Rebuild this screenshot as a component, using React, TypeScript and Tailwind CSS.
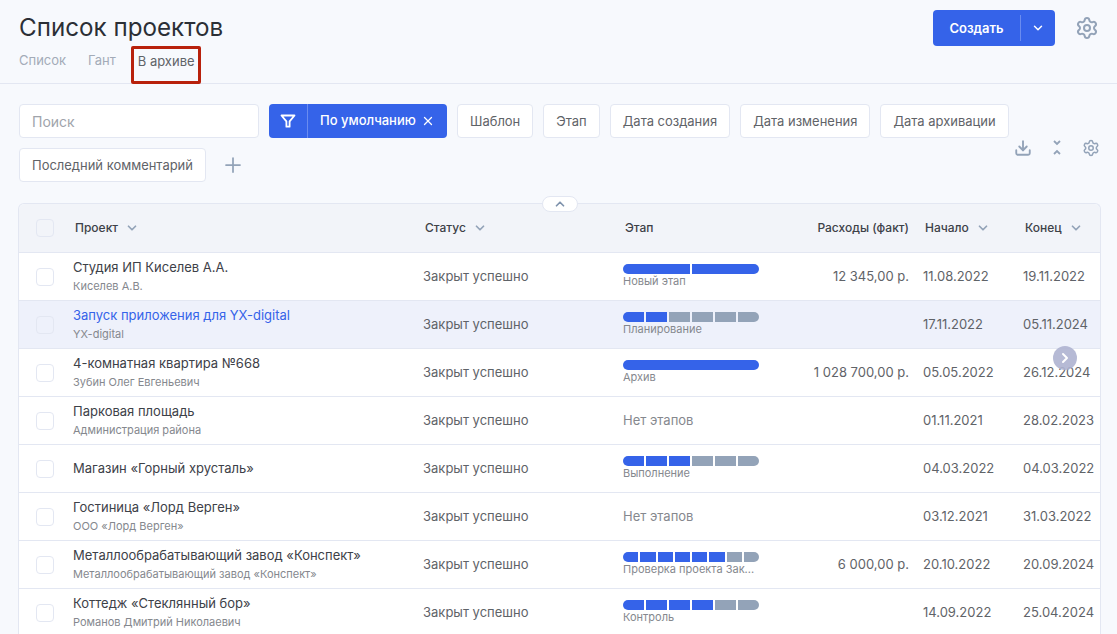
import { ChevronDown, ChevronRight, ChevronUp, Download, Plus, Settings, X } from "lucide-react";

type Project = {
  name: string;
  client: string;
  stage?: string;
  done?: number;
  total?: number;
  cost?: string;
  start: string;
  end: string;
  active?: boolean;
};

const projects: Project[] = [
  { name: "Студия ИП Киселев А.А.", client: "Киселев А.В.", stage: "Новый этап", done: 2, total: 2, cost: "12 345,00 р.", start: "11.08.2022", end: "19.11.2022" },
  { name: "Запуск приложения для YX-digital", client: "YX-digital", stage: "Планирование", done: 2, total: 6, start: "17.11.2022", end: "05.11.2024", active: true },
  { name: "4-комнатная квартира №668", client: "Зубин Олег Евгеньевич", stage: "Архив", done: 1, total: 1, cost: "1 028 700,00 р.", start: "05.05.2022", end: "26.12.2024" },
  { name: "Парковая площадь", client: "Администрация района", start: "01.11.2021", end: "28.02.2023" },
  { name: "Магазин «Горный хрусталь»", client: "", stage: "Выполнение", done: 3, total: 6, start: "04.03.2022", end: "04.03.2022" },
  { name: "Гостиница «Лорд Верген»", client: "ООО «Лорд Верген»", start: "03.12.2021", end: "31.03.2022" },
  { name: "Металлообрабатывающий завод «Конспект»", client: "Металлообрабатывающий завод «Конспект»", stage: "Проверка проекта Зак...", done: 6, total: 8, cost: "6 000,00 р.", start: "20.10.2022", end: "20.09.2024" },
  { name: "Коттедж «Стеклянный бор»", client: "Романов Дмитрий Николаевич", stage: "Контроль", done: 4, total: 6, start: "14.09.2022", end: "25.04.2024" },
];

const filters = ["Шаблон", "Этап", "Дата создания", "Дата изменения", "Дата архивации"];

const rowGrid = "grid grid-cols-[54px_350px_200px_136px_164px_100px_79px]";

function FilterChip({ label }: { label: string }) {
  return (
    <div className="flex h-[34px] items-center rounded-[4px] border border-[#e3e7f2] bg-white px-3 pt-[1px] text-[12.97px] text-[#5f6368]">
      {label}
    </div>
  );
}

function HeadCell({ label, className }: { label: string; className?: string }) {
  return (
    <div className={`flex items-center gap-[7px] text-[12px] font-medium text-[#3d4148] ${className ?? ""}`}>
      {label}
      <ChevronDown className="h-[14px] w-[14px] text-[#93a3b8]" strokeWidth={3} />
    </div>
  );
}

function StageBar({ done, total }: { done: number; total: number }) {
  return (
    <div className="flex h-2.5 w-[136px] gap-[2px] overflow-hidden rounded-full">
      {Array.from({ length: total }, (_, i) => (
        <div key={i} className={`flex-1 ${i < done ? "bg-[#3563e9]" : "bg-[#93a3b8]"}`} />
      ))}
    </div>
  );
}

function ProjectRow({ project }: { project: Project }) {
  return (
    <div className={`${rowGrid} h-12 items-center border-b border-[#e3e7f2] ${project.active ? "bg-[#eef1fb]" : "bg-white"}`}>
      <div className="pl-[17px]">
        <div className={`h-[18px] w-[18px] rounded-[4px] border border-[#e3e7f2] ${project.active ? "bg-[#eef1fb]" : "bg-white"}`} />
      </div>
      <div className="min-w-0 pb-[2px]">
        <div className={`whitespace-nowrap text-[13px] leading-[18px] ${project.active ? "text-[#3563e9]" : "text-[#3d4148]"}`}>
          {project.name}
        </div>
        {project.client && (
          <div className="mt-[2px] whitespace-nowrap text-[11px] leading-[16px] text-[#85888e]">{project.client}</div>
        )}
      </div>
      <div className="text-[13px] text-[#5f6368]">Закрыт успешно</div>
      <div>
        {project.stage ? (
          <div className="pb-[1px]">
            <StageBar done={project.done ?? 0} total={project.total ?? 1} />
            <div className="whitespace-nowrap text-[11px] leading-[14px] text-[#85888e]">{project.stage}</div>
          </div>
        ) : (
          <div className="text-[13px] text-[#85888e]">Нет этапов</div>
        )}
      </div>
      <div className="whitespace-nowrap pr-[14px] text-right text-[13px] text-[#5f6368]">{project.cost}</div>
      <div className="text-[13px] text-[#5f6368]">{project.start}</div>
      <div className="text-[13px] text-[#5f6368]">{project.end}</div>
    </div>
  );
}

export default function App() {
  return (
    <div className="h-[634px] w-[1117px] overflow-hidden bg-[#f7f9fd] font-['Inter',sans-serif]">
      <header className="flex h-[84px] items-start justify-between border-b border-[#e3e7f2] pl-[19px] pr-[18px]">
        <div>
          <h1 className="mt-[12px] text-[24.2px] font-normal leading-[32px] text-[#2b2f36]">Список проектов</h1>
          <nav className="mt-[2px] flex text-[13px] leading-[28px]">
            <span className="mr-[22px] text-[#a3abb8]">Список</span>
            <span className="mr-[15px] text-[#a3abb8]">Гант</span>
            <span className="h-[38px] w-[70px] rounded-[2px] border-[3px] border-[#b8210c] pl-[4px] text-[#5f6368] [line-height:24px]">
              В архиве
            </span>
          </nav>
        </div>
        <div className="mt-[10px] flex items-center gap-[20px]">
          <div className="flex h-9 w-[122px] items-center rounded-[4px] bg-[#3563e9] text-white">
            <span className="flex-1 pt-[1px] text-center text-[13px] font-semibold">Создать</span>
            <span className="h-[26px] w-px bg-[#6a8cf0]" />
            <span className="flex w-[34px] justify-center">
              <ChevronDown className="h-[14px] w-[14px]" strokeWidth={2.5} />
            </span>
          </div>
          <Settings className="h-6 w-6 text-[#93a3b8]" strokeWidth={2} />
        </div>
      </header>

      <section className="flex items-start justify-between pl-[19px] pr-[17px] pt-5">
        <div className="flex w-[1000px] flex-wrap items-center gap-x-[10px] gap-y-[10px]">
          <div className="flex h-[34px] w-[240px] items-center rounded-[4px] border border-[#e3e7f2] bg-white px-3 text-[14px] text-[#a0a4ab]">
            Поиск
          </div>
          <div className="flex h-[34px] w-[178px] items-center rounded-[4px] bg-[#3563e9] text-white">
            <span className="flex h-full w-[39px] items-center justify-center border-r border-[#6a8cf0]">
              <svg viewBox="0 0 16 16" className="h-4 w-4" fill="none" stroke="currentColor" strokeWidth="1.8" strokeLinejoin="round">
                <path d="M1.5 2.5h13L9.6 8.4v5.3H6.4V8.4z" />
              </svg>
            </span>
            <span className="ml-3 whitespace-nowrap text-[13px] font-medium">По умолчанию</span>
            <X className="ml-[5px] h-[14px] w-[14px]" strokeWidth={2.25} />
          </div>
          {filters.map((label) => (
            <FilterChip key={label} label={label} />
          ))}
          <FilterChip label="Последний комментарий" />
          <Plus className="ml-[5px] h-6 w-6 text-[#93a3b8]" strokeWidth={1.75} />
        </div>
        <div className="mt-[35px] flex items-center gap-[17px] text-[#93a3b8]">
          <Download className="h-[18px] w-[18px]" strokeWidth={2.5} />
          <svg viewBox="0 0 16 18" className="h-[18px] w-[16px]" fill="none" stroke="currentColor" strokeWidth="1.8">
            <path d="M5 2l3 3 3-3M5 15l3-3 3 3" />
          </svg>
          <Settings className="h-[18px] w-[18px]" strokeWidth={2} />
        </div>
      </section>

      <section className="relative ml-[18px] mr-[16px] mt-[21px] w-[1083px] rounded-t-[6px] border-x border-t border-[#e3e7f2]">
        <div className="absolute left-[523px] top-[-8px] z-10 flex h-4 w-9 items-center justify-center rounded-full border border-[#e3e7f2] bg-white">
          <ChevronUp className="h-[14px] w-[14px] text-[#7f93ad]" strokeWidth={3} />
        </div>
        <div className={`${rowGrid} h-[49px] items-center rounded-t-[6px] border-b border-[#e3e7f2] bg-[#f2f4f9]`}>
          <div className="pl-[17px]">
            <div className="h-[18px] w-[18px] rounded-[4px] border border-[#e3e7f2] bg-[#f2f4f9]" />
          </div>
          <HeadCell label="Проект" className="pl-[2px]" />
          <HeadCell label="Статус" className="pl-[2px]" />
          <div className="pl-[2px] text-[12px] font-medium text-[#3d4148]">Этап</div>
          <div className="whitespace-nowrap pr-[14px] text-right text-[12px] font-medium text-[#3d4148]">Расходы (факт)</div>
          <HeadCell label="Начало" className="pl-[2px]" />
          <HeadCell label="Конец" className="pl-[2px]" />
        </div>
        {projects.map((project) => (
          <ProjectRow key={project.name} project={project} />
        ))}
        <div className="absolute left-[1034px] top-[142px] flex h-6 w-6 items-center justify-center rounded-full bg-[#aeb2d0]/90 text-white">
          <ChevronRight className="h-4 w-4" strokeWidth={3} />
        </div>
      </section>
    </div>
  );
}
